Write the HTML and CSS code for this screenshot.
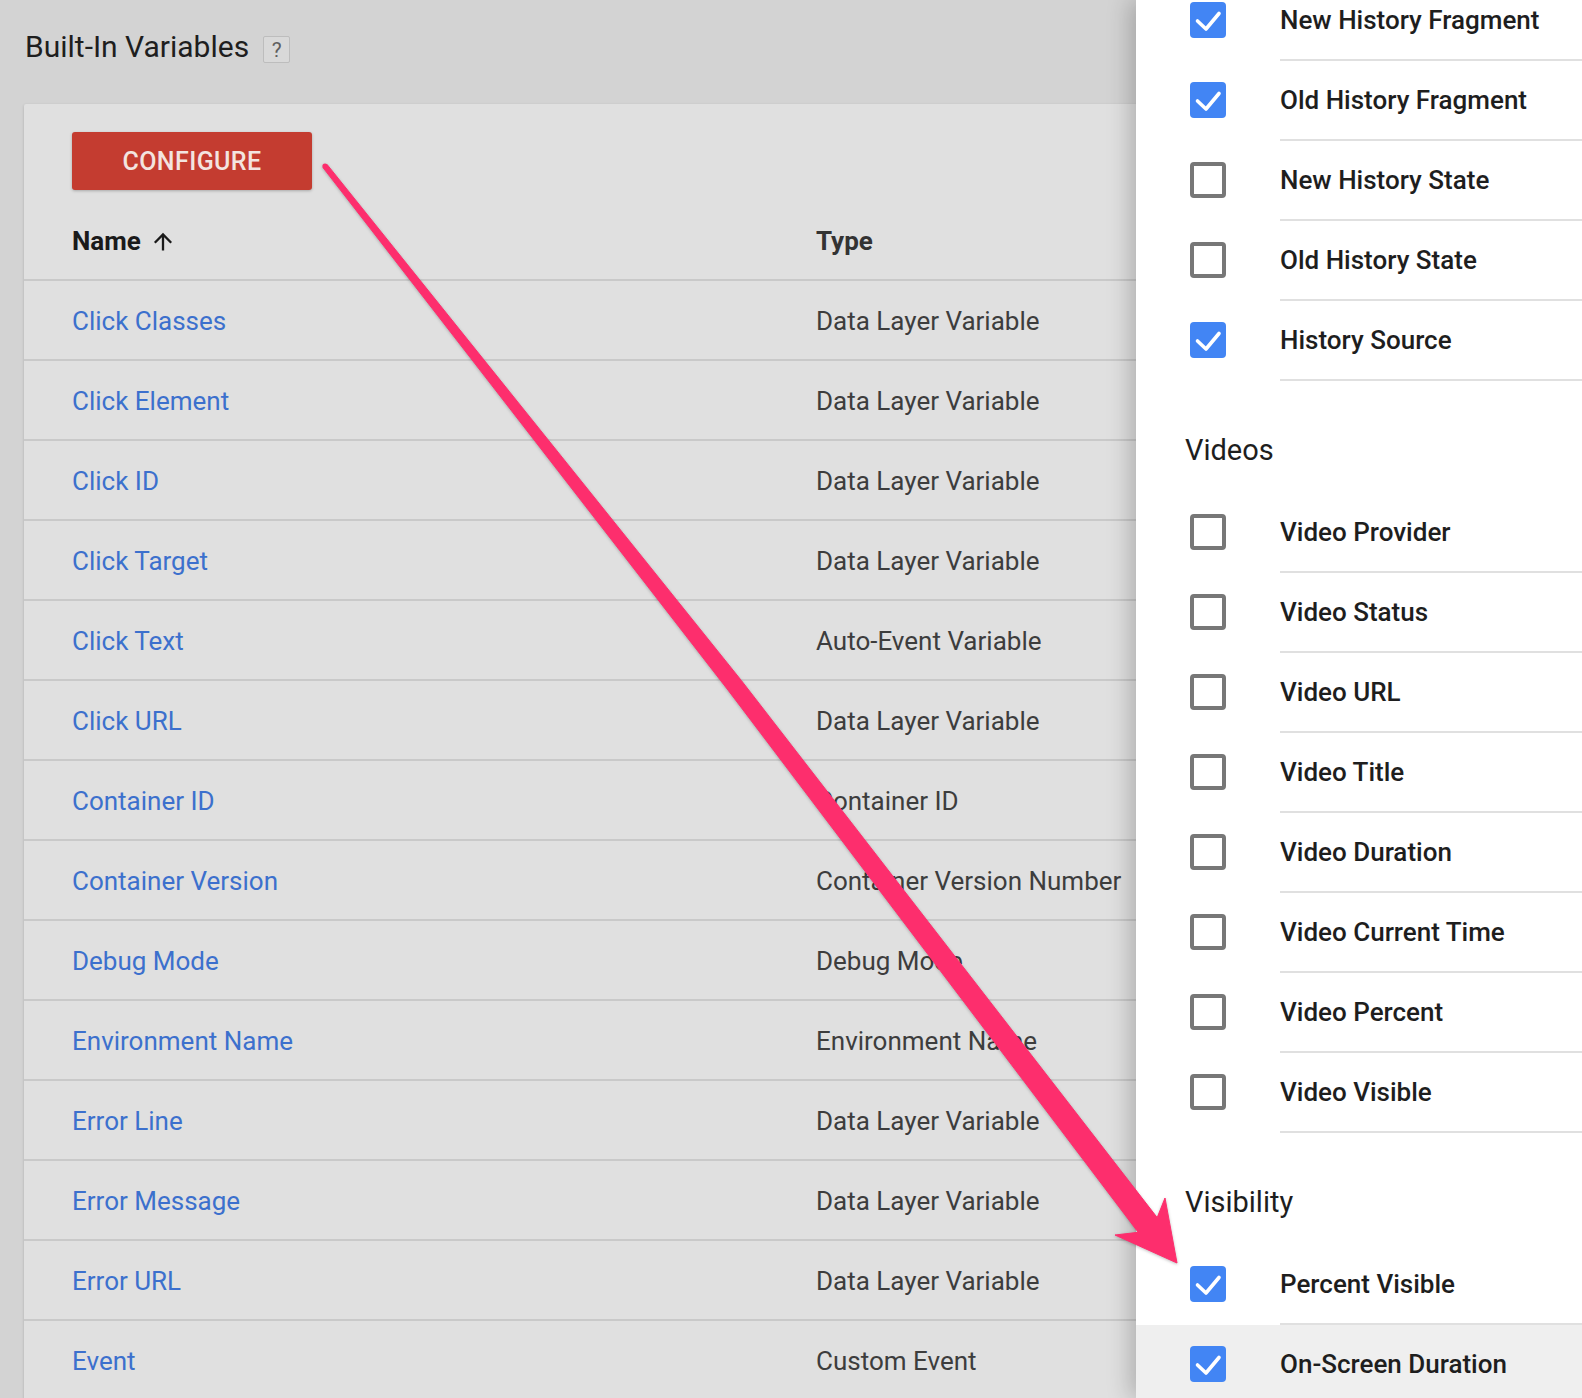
FILE: index.html
```html
<!DOCTYPE html>
<html lang="en">
<head>
<meta charset="utf-8">
<title>Built-In Variables</title>
<link rel="stylesheet" href="styles.css">
</head>
<body>
<div class="page">
  <main class="main">
    <div class="title-row">
      <h1 class="title">Built-In Variables</h1>
      <span class="help">?</span>
    </div>
    <section class="card">
      <div class="card-actions">
        <button class="btn-configure">CONFIGURE</button>
      </div>
      <div class="table">
        <div class="row thead">
          <div class="c-name">Name
            <svg class="sort-icon" width="22" height="19" viewBox="0 0 22 19"><path d="M11 18.5V2.5M2.8 10.7L11 2.5 19.2 10.7" fill="none" stroke="#1a1a1a" stroke-width="2.3"/></svg>
          </div>
          <div class="c-type">Type</div>
        </div>
        <div class="row"><a class="c-name link">Click Classes</a><div class="c-type">Data Layer Variable</div></div>
        <div class="row"><a class="c-name link">Click Element</a><div class="c-type">Data Layer Variable</div></div>
        <div class="row"><a class="c-name link">Click ID</a><div class="c-type">Data Layer Variable</div></div>
        <div class="row"><a class="c-name link">Click Target</a><div class="c-type">Data Layer Variable</div></div>
        <div class="row"><a class="c-name link">Click Text</a><div class="c-type">Auto-Event Variable</div></div>
        <div class="row"><a class="c-name link">Click URL</a><div class="c-type">Data Layer Variable</div></div>
        <div class="row"><a class="c-name link">Container ID</a><div class="c-type">Container ID</div></div>
        <div class="row"><a class="c-name link">Container Version</a><div class="c-type">Container Version Number</div></div>
        <div class="row"><a class="c-name link">Debug Mode</a><div class="c-type">Debug Mode</div></div>
        <div class="row"><a class="c-name link">Environment Name</a><div class="c-type">Environment Name</div></div>
        <div class="row"><a class="c-name link">Error Line</a><div class="c-type">Data Layer Variable</div></div>
        <div class="row"><a class="c-name link">Error Message</a><div class="c-type">Data Layer Variable</div></div>
        <div class="row"><a class="c-name link">Error URL</a><div class="c-type">Data Layer Variable</div></div>
        <div class="row"><a class="c-name link">Event</a><div class="c-type">Custom Event</div></div>
      </div>
    </section>
  </main>

  <aside class="panel">
    <div class="panel-inner">
      <div class="opt"><span class="cb on"><svg viewBox="0 0 36 36"><path d="M7.5 19l8.5 8L29 11.5" fill="none" stroke="#fff" stroke-width="3.6" stroke-linecap="round" stroke-linejoin="round"/></svg></span><span class="opt-label">New History Fragment</span></div>
      <div class="opt"><span class="cb on"><svg viewBox="0 0 36 36"><path d="M7.5 19l8.5 8L29 11.5" fill="none" stroke="#fff" stroke-width="3.6" stroke-linecap="round" stroke-linejoin="round"/></svg></span><span class="opt-label">Old History Fragment</span></div>
      <div class="opt"><span class="cb"></span><span class="opt-label">New History State</span></div>
      <div class="opt"><span class="cb"></span><span class="opt-label">Old History State</span></div>
      <div class="opt"><span class="cb on"><svg viewBox="0 0 36 36"><path d="M7.5 19l8.5 8L29 11.5" fill="none" stroke="#fff" stroke-width="3.6" stroke-linecap="round" stroke-linejoin="round"/></svg></span><span class="opt-label">History Source</span></div>

      <h2 class="group-title">Videos</h2>
      <div class="opt"><span class="cb"></span><span class="opt-label">Video Provider</span></div>
      <div class="opt"><span class="cb"></span><span class="opt-label">Video Status</span></div>
      <div class="opt"><span class="cb"></span><span class="opt-label">Video URL</span></div>
      <div class="opt"><span class="cb"></span><span class="opt-label">Video Title</span></div>
      <div class="opt"><span class="cb"></span><span class="opt-label">Video Duration</span></div>
      <div class="opt"><span class="cb"></span><span class="opt-label">Video Current Time</span></div>
      <div class="opt"><span class="cb"></span><span class="opt-label">Video Percent</span></div>
      <div class="opt"><span class="cb"></span><span class="opt-label">Video Visible</span></div>

      <h2 class="group-title">Visibility</h2>
      <div class="opt"><span class="cb on"><svg viewBox="0 0 36 36"><path d="M7.5 19l8.5 8L29 11.5" fill="none" stroke="#fff" stroke-width="3.6" stroke-linecap="round" stroke-linejoin="round"/></svg></span><span class="opt-label">Percent Visible</span></div>
      <div class="opt hover"><span class="cb on"><svg viewBox="0 0 36 36"><path d="M7.5 19l8.5 8L29 11.5" fill="none" stroke="#fff" stroke-width="3.6" stroke-linecap="round" stroke-linejoin="round"/></svg></span><span class="opt-label">On-Screen Duration</span></div>
    </div>
  </aside>

  <svg class="annotation" width="1582" height="1398" viewBox="0 0 1582 1398">
    <circle cx="325" cy="166" r="2.6" fill="#fd2e6d"/>
    <polygon points="323.0,167.6 728.5,690.7 1138.2,1232.3 1115,1235 1177,1263 1165,1198 1157.2,1217.6 741.5,680.7 327.0,164.4" fill="#fd2e6d" stroke="#fd2e6d" stroke-width="1" stroke-linejoin="round"/>
  </svg>
</div>
</body>
</html>
```

FILE: styles.css
```css
html, body {
  margin: 0;
  padding: 0;
  height: 100%;
  overflow: hidden;
}

body {
  font-family: Roboto, "Liberation Sans", Arial, sans-serif;
  background: #d3d3d3;
  color: #1e1e1e;
}

.page {
  position: relative;
  width: 1582px;
  height: 1398px;
  overflow: hidden;
}

.main {
  padding: 30px 0 0 24px;
}

.title-row {
  display: flex;
  align-items: center;
  gap: 14px;
  margin-left: 1px;
}

.title {
  margin: 0;
  font-size: 30px;
  line-height: 34px;
  font-weight: 400;
  color: #1e1e1e;
}

.help {
  margin-top: 5px;
  width: 25px;
  height: 25px;
  border: 1px solid #bdbdbd;
  border-radius: 2px;
  background: #d9d9d9;
  color: #5f5f5f;
  font-size: 21px;
  line-height: 27px;
  text-align: center;
  box-sizing: content-box;
}

.card {
  margin-top: 40px;
  background: #e0e0e0;
  box-shadow: 0 1px 3px rgba(0,0,0,0.18);
  border-radius: 2px;
}

.card-actions {
  padding: 28px 0 11px 48px;
}

.btn-configure {
  display: block;
  width: 240px;
  height: 58px;
  border: none;
  border-radius: 3px;
  background: #c43c30;
  color: #f3e4e0;
  font-family: Roboto, "Liberation Sans", Arial, sans-serif;
  font-size: 25px;
  font-weight: 500;
  letter-spacing: 0.4px;
  box-shadow: 0 1px 3px rgba(0,0,0,0.25);
  padding: 0;
}

.row {
  display: flex;
  align-items: center;
  box-sizing: border-box;
  height: 80px;
  padding-top: 2px;
  border-bottom: 2px solid #c9c9c9;
  padding-left: 48px;
  font-size: 26px;
}

.c-name {
  width: 744px;
  flex: none;
  display: flex;
  align-items: center;
}

.c-type {
  color: #3d3d3d;
  white-space: nowrap;
}

.thead .c-name {
  font-weight: 700;
  color: #1a1a1a;
}

.thead .c-type {
  font-weight: 700;
  color: #333;
}

.sort-icon {
  margin-left: 11px;
}

.link {
  color: #3c70cd;
  text-decoration: none;
}

/* Side sheet overlay */
.panel {
  position: absolute;
  top: 0;
  left: 1136px;
  right: 0;
  bottom: 0;
  background: #fff;
  box-shadow: -6px 0 22px rgba(0,0,0,0.22);
  overflow: hidden;
}

.panel-inner {
  margin-top: -19px;
}

.opt {
  display: flex;
  height: 80px;
}

.opt.hover {
  background: #efefef;
}

.cb {
  flex: none;
  width: 36px;
  height: 36px;
  margin: 21px 54px 0 54px;
  box-sizing: border-box;
  border: 4px solid #777;
  border-radius: 4px;
  background: #fff;
}

.cb.on {
  border: none;
  background: #4285f4;
}

.cb svg {
  display: block;
  width: 36px;
  height: 36px;
}

.opt-label {
  flex: 1;
  display: flex;
  align-items: center;
  height: 78px;
  border-bottom: 2px solid #e0e0e0;
  font-size: 26px;
  font-weight: 500;
  color: #1e1e1e;
  white-space: nowrap;
}

.group-title {
  margin: 0;
  padding: 52px 0 26px 49px;
  font-size: 29px;
  line-height: 34px;
  font-weight: 400;
  color: #1e1e1e;
}

.annotation {
  position: absolute;
  top: 0;
  left: 0;
  pointer-events: none;
  filter: drop-shadow(0 1px 1.5px rgba(0,0,0,0.25));
}
```
